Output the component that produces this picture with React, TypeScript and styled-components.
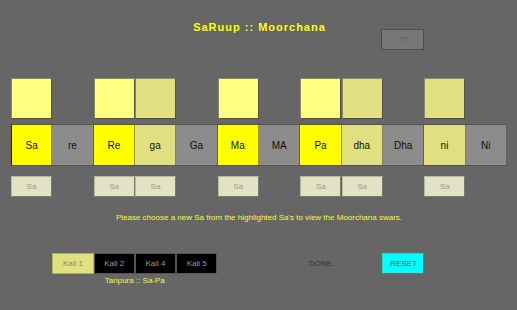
import styled, { createGlobalStyle } from 'styled-components';

const GlobalStyle = createGlobalStyle`
  html, body {
    margin: 0;
    padding: 0;
    background: #666666;
  }
  body {
    font-family: "Liberation Sans", Arial, sans-serif;
  }
`

type Swar = {
  name: string;
  tone: 'bright' | 'pale' | 'gray';
  slot?: 'light' | 'olive';
};

const swars: Swar[] = [
  { name: 'Sa', tone: 'bright', slot: 'light' },
  { name: 're', tone: 'gray' },
  { name: 'Re', tone: 'bright', slot: 'light' },
  { name: 'ga', tone: 'pale', slot: 'olive' },
  { name: 'Ga', tone: 'gray' },
  { name: 'Ma', tone: 'bright', slot: 'light' },
  { name: 'MA', tone: 'gray' },
  { name: 'Pa', tone: 'bright', slot: 'light' },
  { name: 'dha', tone: 'pale', slot: 'olive' },
  { name: 'Dha', tone: 'gray' },
  { name: 'ni', tone: 'pale', slot: 'olive' },
  { name: 'Ni', tone: 'gray' },
];

const kalis = ['Kali 1', 'Kali 2', 'Kali 4', 'Kali 5'];

const keyColors = {
  bright: '#ffff00',
  pale: '#e0e080',
  gray: '#8c8c8c',
};

const slotColors = {
  light: '#ffff80',
  olive: '#e0e080',
};

const App = (): JSX.Element => {
  return (
    <Page>
      <GlobalStyle />
      <Header>
        <Title>SaRuup :: Moorchana</Title>
        <HelpButton>??</HelpButton>
      </Header>

      <SlotRow>
        {swars.map((s, i) =>
          s.slot ? <Slot key={s.name} $col={i + 1} $color={slotColors[s.slot]} /> : null
        )}
      </SlotRow>

      <KeyRow>
        {swars.map((s, i) => (
          <Key key={s.name} $color={keyColors[s.tone]} $first={i === 0}>
            {s.name}
          </Key>
        ))}
      </KeyRow>

      <SaRow>
        {swars.map((s, i) =>
          s.slot ? <SaButton key={s.name} $col={i + 1}>Sa</SaButton> : null
        )}
      </SaRow>

      <Instruction>
        Please choose a new Sa from the highlighted Sa's to view the Moorchana swars.
      </Instruction>

      <Controls>
        <KaliGroup>
          {kalis.map((k, i) => (
            <KaliButton key={k} $active={i === 0}>{k}</KaliButton>
          ))}
        </KaliGroup>
        <DoneButton>DONE</DoneButton>
        <ResetButton>RESET</ResetButton>
        <Tanpura>Tanpura :: Sa-Pa</Tanpura>
      </Controls>
    </Page>
  )
};

export default App;

const Page = styled.div`
  box-sizing: border-box;
  width: 517px;
  height: 310px;
  padding: 20px 10px 0 11px;
  background: #666666;
  display: flex;
  flex-direction: column;
  overflow: hidden;
`
const Columns = styled.div`
  display: grid;
  grid-template-columns: repeat(12, 1fr);
`
const Header = styled(Columns)`
  align-items: start;
`
const Title = styled.h1`
  grid-column: 1 / -1;
  grid-row: 1;
  margin: 0;
  text-align: center;
  color: #ffff00;
  font-size: 11px;
  line-height: 14px;
  font-weight: 700;
  letter-spacing: 1px;
  padding-left: 1px;
`
const HelpButton = styled.div`
  grid-column: 10;
  grid-row: 1;
  margin-top: 9px;
  margin-left: -1px;
  box-sizing: border-box;
  width: 43px;
  height: 21px;
  display: flex;
  align-items: center;
  justify-content: center;
  background: #777777;
  border: 1px solid #4e4e4e;
  color: #5a5a5a;
  font-size: 8px;
`
const SlotRow = styled(Columns)`
  height: 41px;
  margin-top: 28px;
`
const Slot = styled.div<{ $col: number; $color: string }>`
  grid-column: ${p => p.$col};
  box-sizing: border-box;
  width: 41px;
  height: 41px;
  background: ${p => p.$color};
  border: 1px solid #8a8a6a;
  border-right-color: #505050;
  border-bottom-color: #505050;
`
const KeyRow = styled(Columns)`
  height: 42px;
  margin-top: 5px;
  box-sizing: border-box;
  border-top: 1px solid #555555;
  border-bottom: 1px solid #555555;
`
const Key = styled.div<{ $color: string; $first: boolean }>`
  display: flex;
  align-items: center;
  justify-content: center;
  background: ${p => p.$color};
  border-right: 1px solid rgba(60, 60, 40, 0.55);
  border-left: ${p => (p.$first ? '1px solid #1a1a50' : 'none')};
  color: #111111;
  font-size: 10px;
`
const SaRow = styled(Columns)`
  height: 21px;
  margin-top: 10px;
`
const SaButton = styled.div<{ $col: number }>`
  grid-column: ${p => p.$col};
  box-sizing: border-box;
  width: 41px;
  height: 21px;
  display: flex;
  align-items: center;
  justify-content: center;
  background: #e2e2c4;
  border: 1px solid #b8b8a0;
  border-right-color: #7a7a6a;
  border-bottom-color: #7a7a6a;
  color: #9a9a8c;
  font-size: 8px;
`
const Instruction = styled.p`
  margin: 16px 0 0;
  text-align: center;
  color: #f6f640;
  font-size: 8px;
  line-height: 10px;
`
const Controls = styled(Columns)`
  margin-top: 30px;
  row-gap: 2px;
`
const KaliGroup = styled.div`
  grid-column: 2 / 6;
  display: grid;
  grid-template-columns: repeat(4, 1fr);
  height: 21px;
`
const KaliButton = styled.div<{ $active: boolean }>`
  display: flex;
  align-items: center;
  justify-content: center;
  box-sizing: border-box;
  background: ${p => (p.$active ? '#e0e080' : '#000000')};
  border: 1px solid ${p => (p.$active ? '#b0b060' : '#555555')};
  color: ${p => (p.$active ? '#8a8a5a' : '#9a9a9a')};
  font-size: 8px;
`
const DoneButton = styled.div`
  grid-column: 8;
  display: flex;
  align-items: center;
  justify-content: center;
  height: 21px;
  color: #333333;
  font-size: 8px;
`
const ResetButton = styled.div`
  grid-column: 10;
  display: flex;
  align-items: center;
  justify-content: center;
  box-sizing: border-box;
  width: 42px;
  height: 21px;
  background: #00ffff;
  border: 1px solid #20d8d8;
  border-right-color: #8a6060;
  border-bottom-color: #8a6060;
  color: #2f6a6a;
  font-size: 8px;
`
const Tanpura = styled.div`
  grid-column: 2 / 6;
  text-align: center;
  color: #f6f640;
  font-size: 8px;
  line-height: 10px;
`
